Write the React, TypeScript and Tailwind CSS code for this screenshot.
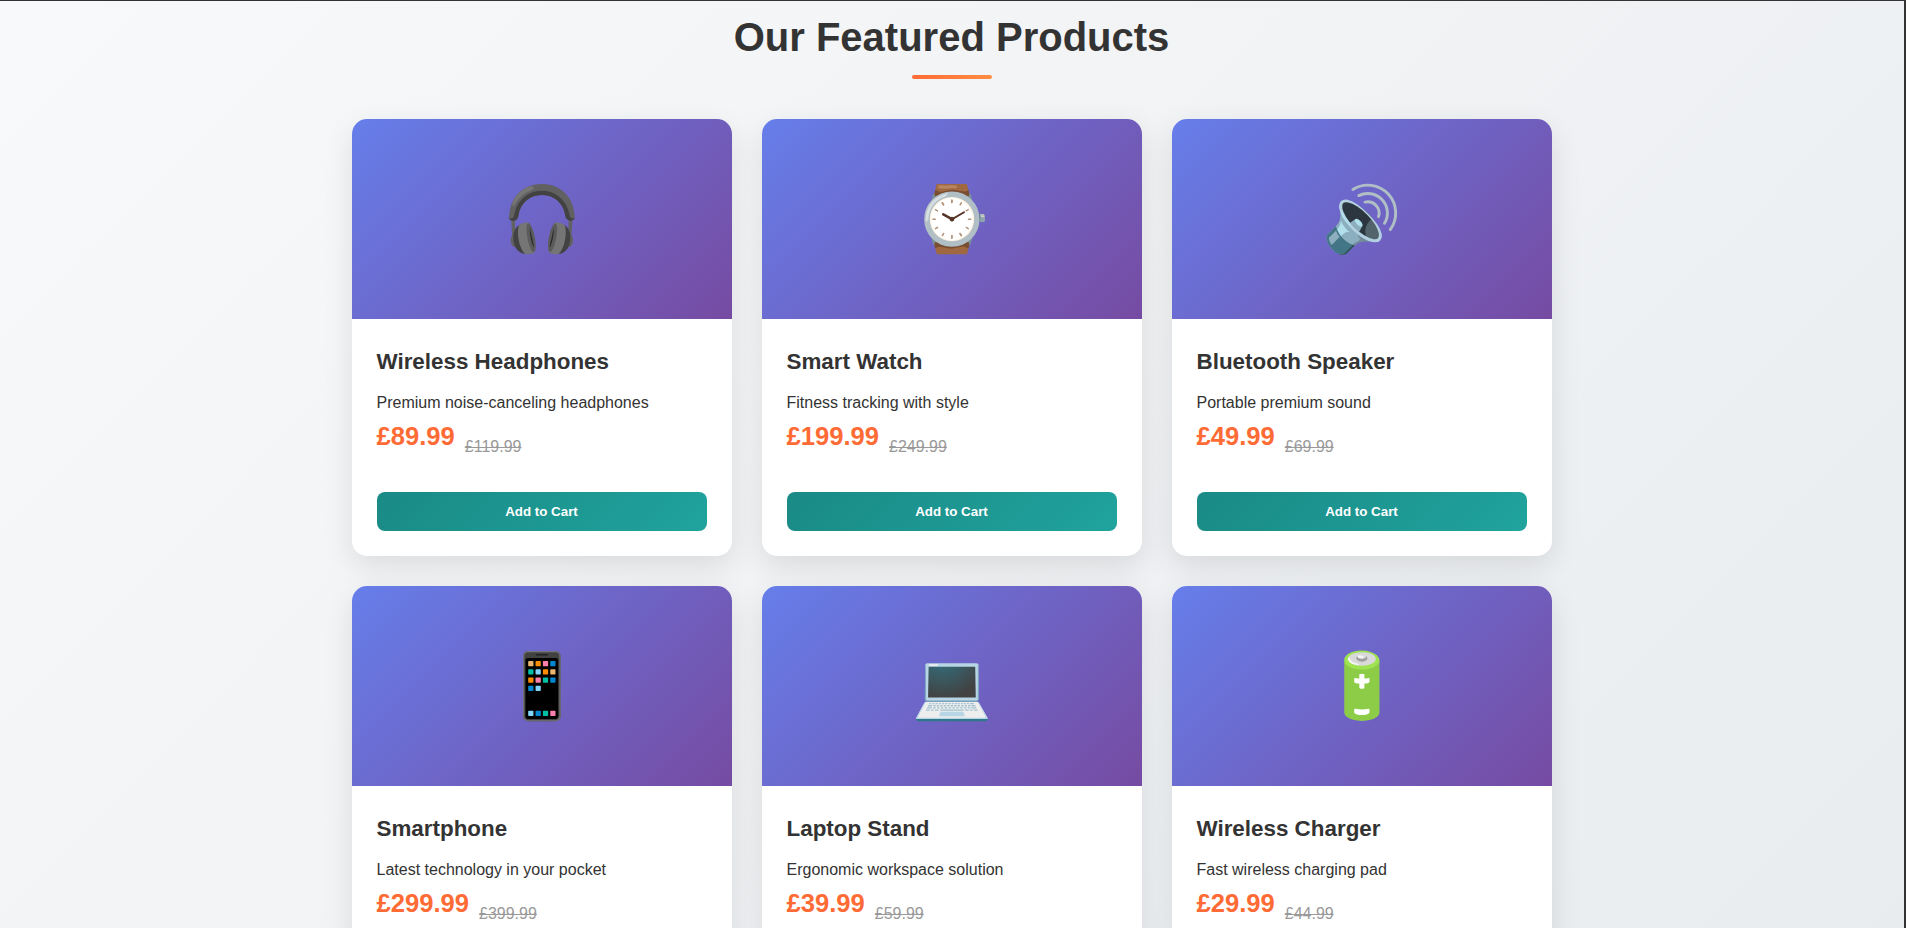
import React from 'react';

interface Product {
  name: string;
  desc: string;
  price: string;
  oldPrice: string;
  emoji: string;
}

const products: Product[] = [
  { name: 'Wireless Headphones', desc: 'Premium noise-canceling headphones', price: '£89.99', oldPrice: '£119.99', emoji: '🎧' },
  { name: 'Smart Watch', desc: 'Fitness tracking with style', price: '£199.99', oldPrice: '£249.99', emoji: '⌚' },
  { name: 'Bluetooth Speaker', desc: 'Portable premium sound', price: '£49.99', oldPrice: '£69.99', emoji: '🔊' },
  { name: 'Smartphone', desc: 'Latest technology in your pocket', price: '£299.99', oldPrice: '£399.99', emoji: '📱' },
  { name: 'Laptop Stand', desc: 'Ergonomic workspace solution', price: '£39.99', oldPrice: '£59.99', emoji: '💻' },
  { name: 'Wireless Charger', desc: 'Fast wireless charging pad', price: '£29.99', oldPrice: '£44.99', emoji: '🔋' },
];

const ProductCard: React.FC<{ product: Product }> = ({ product }) => (
  <div className="overflow-hidden rounded-[15px] bg-white shadow-[0_10px_30px_rgba(0,0,0,0.1)]">
    <div className="flex h-[200px] items-center justify-center bg-[linear-gradient(135deg,#667eea_0%,#764ba2_100%)] text-[64px] leading-none">
      {product.emoji}
    </div>
    <div className="p-[25px]">
      <h3 className="mb-[10px] text-[22.4px] leading-[36px] font-bold text-[#333]">{product.name}</h3>
      <p className="text-base leading-[25.6px] text-[#333]">{product.desc}</p>
      <div className="mb-[35.4px] flex h-[41px] gap-[10px]">
        <span className="text-[25.6px] leading-[41px] font-bold text-[#ff6b35]">{product.price}</span>
        <span className="mt-[18px] text-base leading-[25.6px] text-[#999] line-through">{product.oldPrice}</span>
      </div>
      <button className="h-[39px] w-full rounded-[8px] bg-[linear-gradient(135deg,#1a8a85_0%,#20a39e_100%)] pt-px text-[13.33px] leading-[15px] font-bold text-white">
        Add to Cart
      </button>
    </div>
  </div>
);

export default function App() {
  return (
    <div className="h-screen overflow-hidden border-t border-r-2 border-[#333] bg-[linear-gradient(135deg,#f8f9fa_0%,#e9ecef_100%)] pr-px font-['Liberation_Sans',sans-serif]">
      <div className="mx-auto w-[1200px]">
        <h2 className="pt-[13px] text-center text-[40px] leading-[46px] font-bold text-[#333]">Our Featured Products</h2>
        <div className="mx-auto mt-[15px] mb-[40px] h-[4px] w-[80px] rounded-[2px] bg-[linear-gradient(90deg,#ff6b35,#ff8c42)]" />
        <div className="grid grid-cols-3 gap-[30px]">
          {products.map((product) => (
            <ProductCard key={product.name} product={product} />
          ))}
        </div>
      </div>
    </div>
  );
}
